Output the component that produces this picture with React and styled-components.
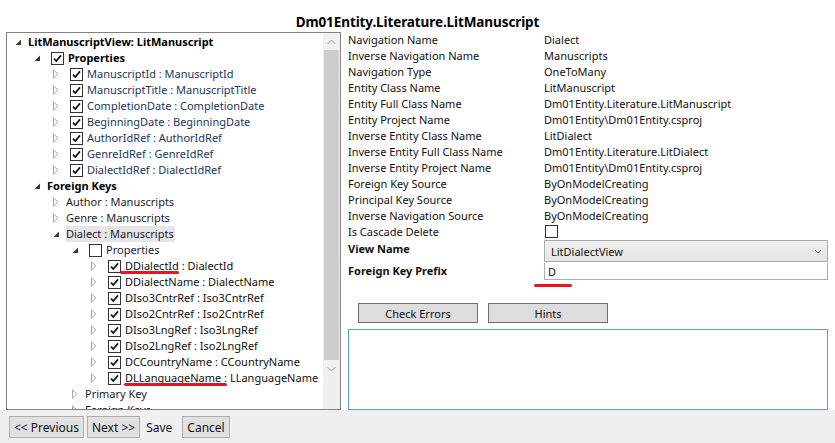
import React from "react";
import styled, { createGlobalStyle, css } from "styled-components";

const GlobalStyle = createGlobalStyle`
    html, body {
        margin: 0;
        padding: 0;
        background: #ffffff;
    }
    body {
        font-family: "Noto Sans", "Open Sans", sans-serif;
        font-size: 11px;
        color: #000;
    }
`;

const treeRows = [
    { level: 0, exp: "open", text: "LitManuscriptView: LitManuscript", bold: true },
    { level: 1, exp: "open", check: true, text: "Properties", bold: true },
    { level: 2, exp: "closed", check: true, text: "ManuscriptId : ManuscriptId", tone: "blue" },
    { level: 2, exp: "closed", check: true, text: "ManuscriptTitle : ManuscriptTitle", tone: "blue" },
    { level: 2, exp: "closed", check: true, text: "CompletionDate : CompletionDate", tone: "blue" },
    { level: 2, exp: "closed", check: true, text: "BeginningDate : BeginningDate", tone: "blue" },
    { level: 2, exp: "closed", check: true, text: "AuthorIdRef : AuthorIdRef", tone: "blue" },
    { level: 2, exp: "closed", check: true, text: "GenreIdRef : GenreIdRef", tone: "blue" },
    { level: 2, exp: "closed", check: true, text: "DialectIdRef : DialectIdRef", tone: "blue" },
    { level: 1, exp: "open", text: "Foreign Keys", bold: true },
    { level: 2, exp: "closed", text: "Author : Manuscripts", tone: "navy" },
    { level: 2, exp: "closed", text: "Genre : Manuscripts", tone: "navy" },
    { level: 2, exp: "open", text: "Dialect : Manuscripts", tone: "navy", selected: true },
    { level: 3, exp: "open", check: false, text: "Properties", tone: "navy" },
    { level: 4, exp: "closed", check: true, name: "DDialectId", text: " : DialectId", mark: "short" },
    { level: 4, exp: "closed", check: true, text: "DDialectName : DialectName" },
    { level: 4, exp: "closed", check: true, text: "DIso3CntrRef : Iso3CntrRef" },
    { level: 4, exp: "closed", check: true, text: "DIso2CntrRef : Iso2CntrRef" },
    { level: 4, exp: "closed", check: true, text: "DIso3LngRef : Iso3LngRef" },
    { level: 4, exp: "closed", check: true, text: "DIso2LngRef : Iso2LngRef" },
    { level: 4, exp: "closed", check: true, text: "DCCountryName : CCountryName" },
    { level: 4, exp: "closed", check: true, name: "DLLanguageName", text: " : LLanguageName", mark: "long" },
    { level: 3, exp: "closed", text: "Primary Key", tone: "navy" },
    { level: 3, exp: "closed", text: "Foreign Keys", tone: "navy" },
];

const props = [
    ["Navigation Name", "Dialect"],
    ["Inverse Navigation Name", "Manuscripts"],
    ["Navigation Type", "OneToMany"],
    ["Entity Class Name", "LitManuscript"],
    ["Entity Full Class Name", "Dm01Entity.Literature.LitManuscript"],
    ["Entity Project Name", "Dm01Entity\\Dm01Entity.csproj"],
    ["Inverse Entity Class Name", "LitDialect"],
    ["Inverse Entity Full Class Name", "Dm01Entity.Literature.LitDialect"],
    ["Inverse Entity Project Name", "Dm01Entity\\Dm01Entity.csproj"],
    ["Foreign Key Source", "ByOnModelCreating"],
    ["Principal Key Source", "ByOnModelCreating"],
    ["Inverse Navigation Source", "ByOnModelCreating"],
];

const Expander = ({ open }) => (
    <ExpanderBox>
        {open ? (
            <svg width="7" height="7" viewBox="0 0 7 7">
                <path d="M6 0.5 L6 6 L0.5 6 Z" fill="#3a3a3a" />
            </svg>
        ) : (
            <svg width="6" height="10" viewBox="0 0 6 10">
                <path d="M0.5 0.8 L4.8 5 L0.5 9.2 Z" fill="#fff" stroke="#a6a6a6" strokeWidth="1" />
            </svg>
        )}
    </ExpanderBox>
);

const CheckBox = ({ checked }) => (
    <CheckBoxBox>
        {checked && (
            <svg width="11" height="11" viewBox="0 0 11 11">
                <path d="M2 5.6 L4.3 8 L9 2.4" fill="none" stroke="#111" strokeWidth="1.7" />
            </svg>
        )}
    </CheckBoxBox>
);

const TreeItem = ({ row }) => (
    <TreeRow $level={row.level}>
        <Expander open={row.exp === "open"} />
        {row.check !== undefined && <CheckBox checked={row.check} />}
        <TreeLabel $bold={row.bold} $tone={row.tone} $selected={row.selected} $after={row.check !== undefined}>
            {row.name && <Marked $mark={row.mark}>{row.name}</Marked>}
            {row.text}
        </TreeLabel>
    </TreeRow>
);

const App = () => {
    return (
        <Page>
            <GlobalStyle />
            <Title>Dm01Entity.Literature.LitManuscript</Title>
            <Main>
                <TreePanel>
                    <TreeList>
                        {treeRows.map((row, i) => (
                            <TreeItem key={i} row={row} />
                        ))}
                    </TreeList>
                    <ScrollBar>
                        <ScrollArrow>
                            <svg width="9" height="6" viewBox="0 0 9 6">
                                <path d="M0.5 5 L4.5 1 L8.5 5" fill="none" stroke="#a3a3a3" strokeWidth="1" />
                            </svg>
                        </ScrollArrow>
                        <Thumb />
                        <ScrollArrow>
                            <svg width="9" height="6" viewBox="0 0 9 6">
                                <path d="M0.5 1 L4.5 5 L8.5 1" fill="none" stroke="#a3a3a3" strokeWidth="1" />
                            </svg>
                        </ScrollArrow>
                    </ScrollBar>
                </TreePanel>

                <DetailPanel>
                    <PropGrid>
                        {props.map(([k, v]) => (
                            <React.Fragment key={k}>
                                <PropLabel>{k}</PropLabel>
                                <PropValue>{v}</PropValue>
                            </React.Fragment>
                        ))}
                        <PropLabel>Is Cascade Delete</PropLabel>
                        <PropValue>
                            <PlainCheck />
                        </PropValue>
                        <PropLabel $bold $tall>View Name</PropLabel>
                        <Combo>
                            <span>LitDialectView</span>
                            <svg width="8" height="5" viewBox="0 0 8 5">
                                <path d="M1 1 L4 4 L7 1" fill="none" stroke="#606060" strokeWidth="1" />
                            </svg>
                        </Combo>
                        <PropLabel $bold>Foreign Key Prefix</PropLabel>
                        <PrefixBox>
                            <TextInput defaultValue="D" readOnly />
                        </PrefixBox>
                    </PropGrid>

                    <ButtonRow>
                        <PanelButton>Check Errors</PanelButton>
                        <PanelButton>Hints</PanelButton>
                    </ButtonRow>
                    <Output />
                </DetailPanel>
            </Main>
            <Footer>
                <FooterButton>&lt;&lt; Previous</FooterButton>
                <FooterButton>Next &gt;&gt;</FooterButton>
                <FooterButton $flat>Save</FooterButton>
                <FooterButton $gap>Cancel</FooterButton>
            </Footer>
        </Page>
    );
};

const Page = styled.div`
    display: flex;
    flex-direction: column;
    width: 835px;
    height: 443px;
    overflow: hidden;
`;

const Title = styled.div`
    height: 32px;
    box-sizing: border-box;
    padding-top: 12px;
    text-align: center;
    font-size: 13.5px;
    font-weight: bold;
    line-height: 20px;
    letter-spacing: -0.1px;
`;

const Main = styled.div`
    display: flex;
    height: 378px;
`;

const TreePanel = styled.div`
    display: flex;
    margin-left: 6px;
    width: 335px;
    box-sizing: border-box;
    border: 1px solid #828282;
    overflow: hidden;
`;

const TreeList = styled.div`
    flex: 1;
    padding-top: 1px;
    overflow: hidden;
    min-width: 0;
`;

const TreeRow = styled.div`
    display: flex;
    align-items: center;
    height: 16px;
    padding-left: ${(p) => 3 + p.$level * 19}px;
    white-space: nowrap;
`;

const ExpanderBox = styled.div`
    display: flex;
    align-items: center;
    justify-content: center;
    width: 16px;
    height: 16px;
    flex: none;
`;

const CheckBoxBox = styled.div`
    display: flex;
    align-items: center;
    justify-content: center;
    width: 13px;
    height: 13px;
    box-sizing: border-box;
    margin-left: 6px;
    border: 1px solid #333;
    background: #fff;
    flex: none;
`;

const toneColors = {
    blue: "#1b3566",
    navy: "#1a1a36",
};

const TreeLabel = styled.span`
    margin-left: ${(p) => (p.$after ? 4 : 2)}px;
    padding-right: 1px;
    line-height: 16px;
    font-weight: ${(p) => (p.$bold ? "bold" : "normal")};
    color: ${(p) => (p.$bold ? "#000" : toneColors[p.$tone] || "#111")};
    background: ${(p) => (p.$selected ? "#e6e6e6" : "transparent")};
`;

const Marked = styled.span`
    position: relative;
    &::after {
        content: "";
        position: absolute;
        bottom: -1px;
        height: 3px;
        border-radius: 2px;
        background: #e8141e;
        ${(p) =>
            p.$mark === "short"
                ? css`
                      left: -5px;
                      right: 0;
                  `
                : css`
                      left: -1px;
                      right: -6px;
                  `}
    }
`;

const ScrollBar = styled.div`
    display: flex;
    flex-direction: column;
    width: 17px;
    flex: none;
    background: #f0f0f0;
`;

const ScrollArrow = styled.div`
    display: flex;
    align-items: center;
    justify-content: center;
    height: 17px;
    flex: none;
`;

const Thumb = styled.div`
    margin: 0 1px;
    height: 310px;
    background: #cdcdcd;
    flex: none;
`;

const DetailPanel = styled.div`
    flex: 1;
    display: flex;
    flex-direction: column;
    padding: 0 7px 0 7px;
`;

const PropGrid = styled.div`
    display: grid;
    grid-template-columns: 196px 1fr;
    grid-auto-rows: auto;
`;

const PropLabel = styled.div`
    height: ${(p) => (p.$tall ? 22 : 17)}px;
    line-height: 16px;
    font-weight: ${(p) => (p.$bold ? "bold" : "normal")};
    color: #111;
    &:nth-child(-n + 24) {
        height: 16px;
    }
`;

const PropValue = styled.div`
    height: 16px;
    line-height: 16px;
    color: #111;
`;

const PlainCheck = styled.div`
    width: 13px;
    height: 13px;
    box-sizing: border-box;
    margin: 1px 0 0 1px;
    border: 1px solid #333;
    background: #fff;
`;

const Combo = styled.div`
    display: flex;
    align-items: center;
    justify-content: space-between;
    height: 22px;
    box-sizing: border-box;
    margin-top: -1px;
    padding: 0 5px 0 6px;
    border: 1px solid #acacac;
    background: linear-gradient(#f0f0f0, #e5e5e5);
    color: #111;
`;

const PrefixBox = styled.div`
    position: relative;
    &::after {
        content: "";
        position: absolute;
        left: -10px;
        top: 21px;
        width: 38px;
        height: 3px;
        border-radius: 2px;
        background: #e8141e;
    }
`;

const TextInput = styled.input`
    display: block;
    width: 100%;
    height: 17px;
    box-sizing: border-box;
    margin: 0;
    padding: 0 3px;
    border: 1px solid #abadb3;
    border-top: none;
    font: inherit;
    color: #111;
    outline: none;
`;

const ButtonRow = styled.div`
    display: flex;
    gap: 10px;
    margin: 23px 0 6px 10px;
`;

const PanelButton = styled.button`
    width: 120px;
    height: 20px;
    margin: 0;
    padding: 0;
    border: 1px solid #707070;
    background: #dddddd;
    font: inherit;
    color: #111;
`;

const Output = styled.div`
    flex: 1;
    box-sizing: border-box;
    border: 1px solid #5a9be6;
    background: #fff;
`;

const Footer = styled.div`
    flex: 1;
    display: flex;
    align-items: flex-start;
    padding: 6px 0 0 9px;
    background: #f0f0f0;
`;

const FooterButton = styled.button`
    height: 22px;
    margin: 0 3px 0 ${(p) => (p.$gap ? 4 : 0)}px;
    padding: 0 ${(p) => (p.$flat ? 2 : 4)}px;
    border: 1px solid ${(p) => (p.$flat ? "transparent" : "#adadad")};
    background: ${(p) => (p.$flat ? "transparent" : "#e1e1e1")};
    font: inherit;
    font-size: 12px;
    color: #111;
`;

export default App;
